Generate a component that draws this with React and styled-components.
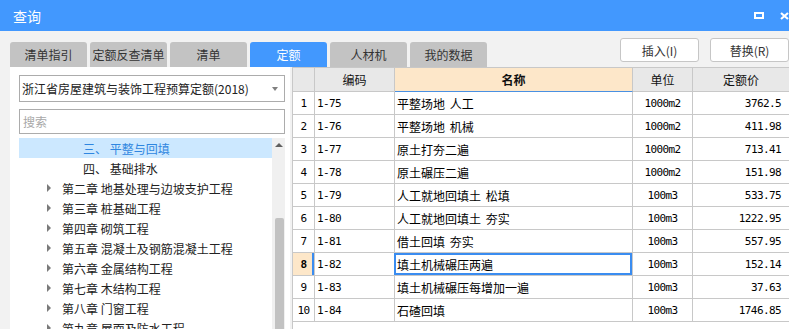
import React from "react";
import styled, { createGlobalStyle } from "styled-components";

const GlobalStyle = createGlobalStyle`
  html, body { margin: 0; padding: 0; }
  body {
    width: 789px; height: 329px; overflow: hidden;
    background: #f2f2f2;
    font-family: "Noto Sans CJK SC", "Noto Sans", sans-serif;
    font-size: 12px;
    color: #222;
  }
  * { box-sizing: border-box; }
`;

const Window = styled.div`
  width: 789px;
  height: 329px;
  display: flex;
  flex-direction: column;
  background: #f2f2f2;
  overflow: hidden;
`;

const TitleBar = styled.div`
  height: 31px;
  flex: none;
  background: #4298fe;
  color: #fff;
  display: flex;
  align-items: center;
  padding-left: 13px;
  font-size: 14px;
`;

const WinControls = styled.div`
  margin-left: auto;
  display: flex;
  align-items: center;
  gap: 16px;
`;

const MaxIcon = styled.div`
  width: 10px;
  height: 7px;
  border: 2px solid #fff;
`;

const TopRow = styled.div`
  height: 36px;
  flex: none;
  display: flex;
  padding-left: 10px;
`;

const Tabs = styled.div`
  display: flex;
  gap: 3px;
  align-self: flex-end;
`;

const Tab = styled.div`
  width: 77px;
  height: 25px;
  border-radius: 3px 3px 0 0;
  background: ${(p) => (p.$active ? "#4298fe" : "#c3c3c3")};
  color: ${(p) => (p.$active ? "#fff" : "#333")};
  display: flex;
  align-items: center;
  justify-content: center;
  font-size: 12px;
  white-space: nowrap;
`;

const Actions = styled.div`
  margin-left: auto;
  display: flex;
  gap: 11px;
  padding-top: 7px;
`;

const ActionButton = styled.div`
  width: 79px;
  height: 24px;
  background: #fff;
  border: 1px solid #c6c6c6;
  border-radius: 3px;
  display: flex;
  align-items: center;
  justify-content: center;
  color: #333;
  font-size: 12px;
`;

const Main = styled.div`
  flex: 1;
  min-height: 0;
  display: flex;
  gap: 2px;
  padding-left: 10px;
`;

const LeftPanel = styled.div`
  width: 280px;
  flex: none;
  background: #fff;
  display: flex;
  flex-direction: column;
  padding: 8px 5px 0 9px;
  min-height: 0;
`;

const Select = styled.div`
  height: 27px;
  flex: none;
  border: 1px solid #acacac;
  display: flex;
  align-items: center;
  padding: 0 6px 0 2px;
  color: #222;
  white-space: nowrap;
`;

const SelectArrow = styled.span`
  margin-left: auto;
  width: 0;
  height: 0;
  border-left: 3.5px solid transparent;
  border-right: 3.5px solid transparent;
  border-top: 4px solid #808080;
`;

const SearchBox = styled.div`
  margin-top: 7px;
  height: 25px;
  flex: none;
  border: 1px solid #acacac;
  display: flex;
  align-items: center;
  padding-left: 3px;
  color: #a8a8a8;
`;

const TreeBox = styled.div`
  margin-top: 4px;
  flex: 1;
  min-height: 0;
  display: flex;
  overflow: hidden;
`;

const TreeList = styled.div`
  flex: 1;
`;

const TreeRow = styled.div`
  height: 20px;
  display: flex;
  align-items: center;
  padding-left: ${(p) => p.$indent}px;
  background: ${(p) => (p.$selected ? "#cce8ff" : "transparent")};
  color: ${(p) => (p.$selected ? "#2f86e0" : "#222")};
  white-space: pre;
`;

const Caret = styled.span`
  width: 0;
  height: 0;
  border-top: 4px solid transparent;
  border-bottom: 4px solid transparent;
  border-left: 4px solid #7a7a7a;
  margin-right: 11px;
`;

const Scrollbar = styled.div`
  width: 13px;
  flex: none;
  background: #f0f0f0;
  display: flex;
  flex-direction: column;
  align-items: center;
`;

const ScrollUp = styled.span`
  margin-top: 5px;
  width: 0;
  height: 0;
  border-left: 4px solid transparent;
  border-right: 4px solid transparent;
  border-bottom: 4px solid #606060;
`;

const ScrollThumb = styled.div`
  margin-top: 71px;
  width: 9px;
  height: 200px;
  align-self: flex-end;
  margin-right: 1px;
  background: #c2c2c2;
  border-radius: 2px 2px 0 0;
`;

const TableWrap = styled.div`
  flex: 1;
  min-width: 0;
  background: #fff;
  border-left: 1px solid #c8c8c8;
  border-top: 1px solid #c8c8c8;
  overflow: hidden;
`;

const Grid = styled.div`
  display: grid;
  grid-template-columns: 22px 80px 238px 60px 97px;
  grid-auto-rows: 23px;
  grid-template-rows: 24px;
`;

const HeadCell = styled.div`
  background: ${(p) => (p.$active ? "#fde7c9" : "#e8e8e8")};
  border-right: 1px solid #c8c8c8;
  border-bottom: 1px solid ${(p) => (p.$active ? "#4a90e2" : "#c8c8c8")};
  display: flex;
  align-items: center;
  justify-content: center;
  font-weight: ${(p) => (p.$active ? 700 : 400)};
  color: #111;
  font-size: 12px;
`;

const Cell = styled.div`
  border-right: 1px solid #c8c8c8;
  border-bottom: 1px solid #c8c8c8;
  display: flex;
  align-items: center;
  justify-content: ${(p) => p.$align || "flex-start"};
  padding: ${(p) => p.$pad || "0 2px"};
  white-space: pre;
  overflow: hidden;
  color: #000;
  font-family: ${(p) =>
    p.$mono
      ? '"DejaVu Sans Mono", "Liberation Mono", monospace'
      : '"Noto Sans CJK SC", sans-serif'};
  font-size: ${(p) => (p.$mono ? "11px" : "12px")};
  letter-spacing: ${(p) => (p.$mono ? "-0.6px" : "0")};
  word-spacing: ${(p) => (p.$mono ? "0" : "2px")};
`;

const RowNum = styled(Cell)`
  justify-content: center;
  padding: 0;
  background: ${(p) => (p.$current ? "#fde7c9" : "#fff")};
  font-weight: ${(p) => (p.$current ? 700 : 400)};
  box-shadow: ${(p) => (p.$current ? "inset -2px 0 0 #3a8cf0" : "none")};
`;

const NameCell = styled(Cell)`
  box-shadow: ${(p) => (p.$focused ? "inset 0 0 0 2px #3a8cf0" : "none")};
  margin-left: ${(p) => (p.$focused ? "-1px" : "0")};
  padding-left: ${(p) => (p.$focused ? "3px" : "2px")};
`;

const tabs = ["清单指引", "定额反查清单", "清单", "定额", "人材机", "我的数据"];

const tree = [
  { t: "三、 平整与回填", indent: 64, selected: true },
  { t: "四、 基础排水", indent: 64 },
  { t: "第二章 地基处理与边坡支护工程", caret: true },
  { t: "第三章 桩基础工程", caret: true },
  { t: "第四章 砌筑工程", caret: true },
  { t: "第五章 混凝土及钢筋混凝土工程", caret: true },
  { t: "第六章 金属结构工程", caret: true },
  { t: "第七章 木结构工程", caret: true },
  { t: "第八章 门窗工程", caret: true },
  { t: "第九章 屋面及防水工程", caret: true },
];

const rows = [
  ["1-75", "平整场地 人工", "1000m2", "3762.5"],
  ["1-76", "平整场地 机械", "1000m2", "411.98"],
  ["1-77", "原土打夯二遍", "1000m2", "713.41"],
  ["1-78", "原土碾压二遍", "1000m2", "151.98"],
  ["1-79", "人工就地回填土 松填", "100m3", "533.75"],
  ["1-80", "人工就地回填土 夯实", "100m3", "1222.95"],
  ["1-81", "借土回填 夯实", "100m3", "557.95"],
  ["1-82", "填土机械碾压两遍", "100m3", "152.14"],
  ["1-83", "填土机械碾压每增加一遍", "100m3", "37.63"],
  ["1-84", "石碴回填", "100m3", "1746.85"],
];

export default function App() {
  return (
    <>
      <GlobalStyle />
      <Window>
        <TitleBar>
          <span>查询</span>
          <WinControls>
            <MaxIcon />
            <svg width="9" height="8" viewBox="0 0 9 8">
              <path d="M1 1 L8 7 M8 1 L1 7" stroke="#fff" strokeWidth="2.2" />
            </svg>
          </WinControls>
        </TitleBar>
        <TopRow>
          <Tabs>
            {tabs.map((t) => (
              <Tab key={t} $active={t === "定额"}>
                {t}
              </Tab>
            ))}
          </Tabs>
          <Actions>
            <ActionButton>插入(I)</ActionButton>
            <ActionButton>替换(R)</ActionButton>
          </Actions>
        </TopRow>
        <Main>
          <LeftPanel>
            <Select>
              <span>浙江省房屋建筑与装饰工程预算定额(2018)</span>
              <SelectArrow />
            </Select>
            <SearchBox>搜索</SearchBox>
            <TreeBox>
              <TreeList>
                {tree.map((n) => (
                  <TreeRow
                    key={n.t}
                    $indent={n.indent || 28}
                    $selected={n.selected}
                  >
                    {n.caret && <Caret />}
                    {n.t}
                  </TreeRow>
                ))}
              </TreeList>
              <Scrollbar>
                <ScrollUp />
                <ScrollThumb />
              </Scrollbar>
            </TreeBox>
          </LeftPanel>
          <TableWrap>
            <Grid>
              <HeadCell />
              <HeadCell>编码</HeadCell>
              <HeadCell $active>名称</HeadCell>
              <HeadCell>单位</HeadCell>
              <HeadCell>定额价</HeadCell>
              {rows.map((r, i) => {
                const cur = i === 7;
                return (
                  <React.Fragment key={r[0]}>
                    <RowNum $mono $current={cur}>
                      {i + 1}
                    </RowNum>
                    <Cell $mono>{r[0]}</Cell>
                    <NameCell $focused={cur}>{r[1]}</NameCell>
                    <Cell $mono $align="center">
                      {r[2]}
                    </Cell>
                    <Cell $mono $align="flex-end" $pad="0 8px 0 0">
                      {r[3]}
                    </Cell>
                  </React.Fragment>
                );
              })}
            </Grid>
          </TableWrap>
        </Main>
      </Window>
    </>
  );
}
